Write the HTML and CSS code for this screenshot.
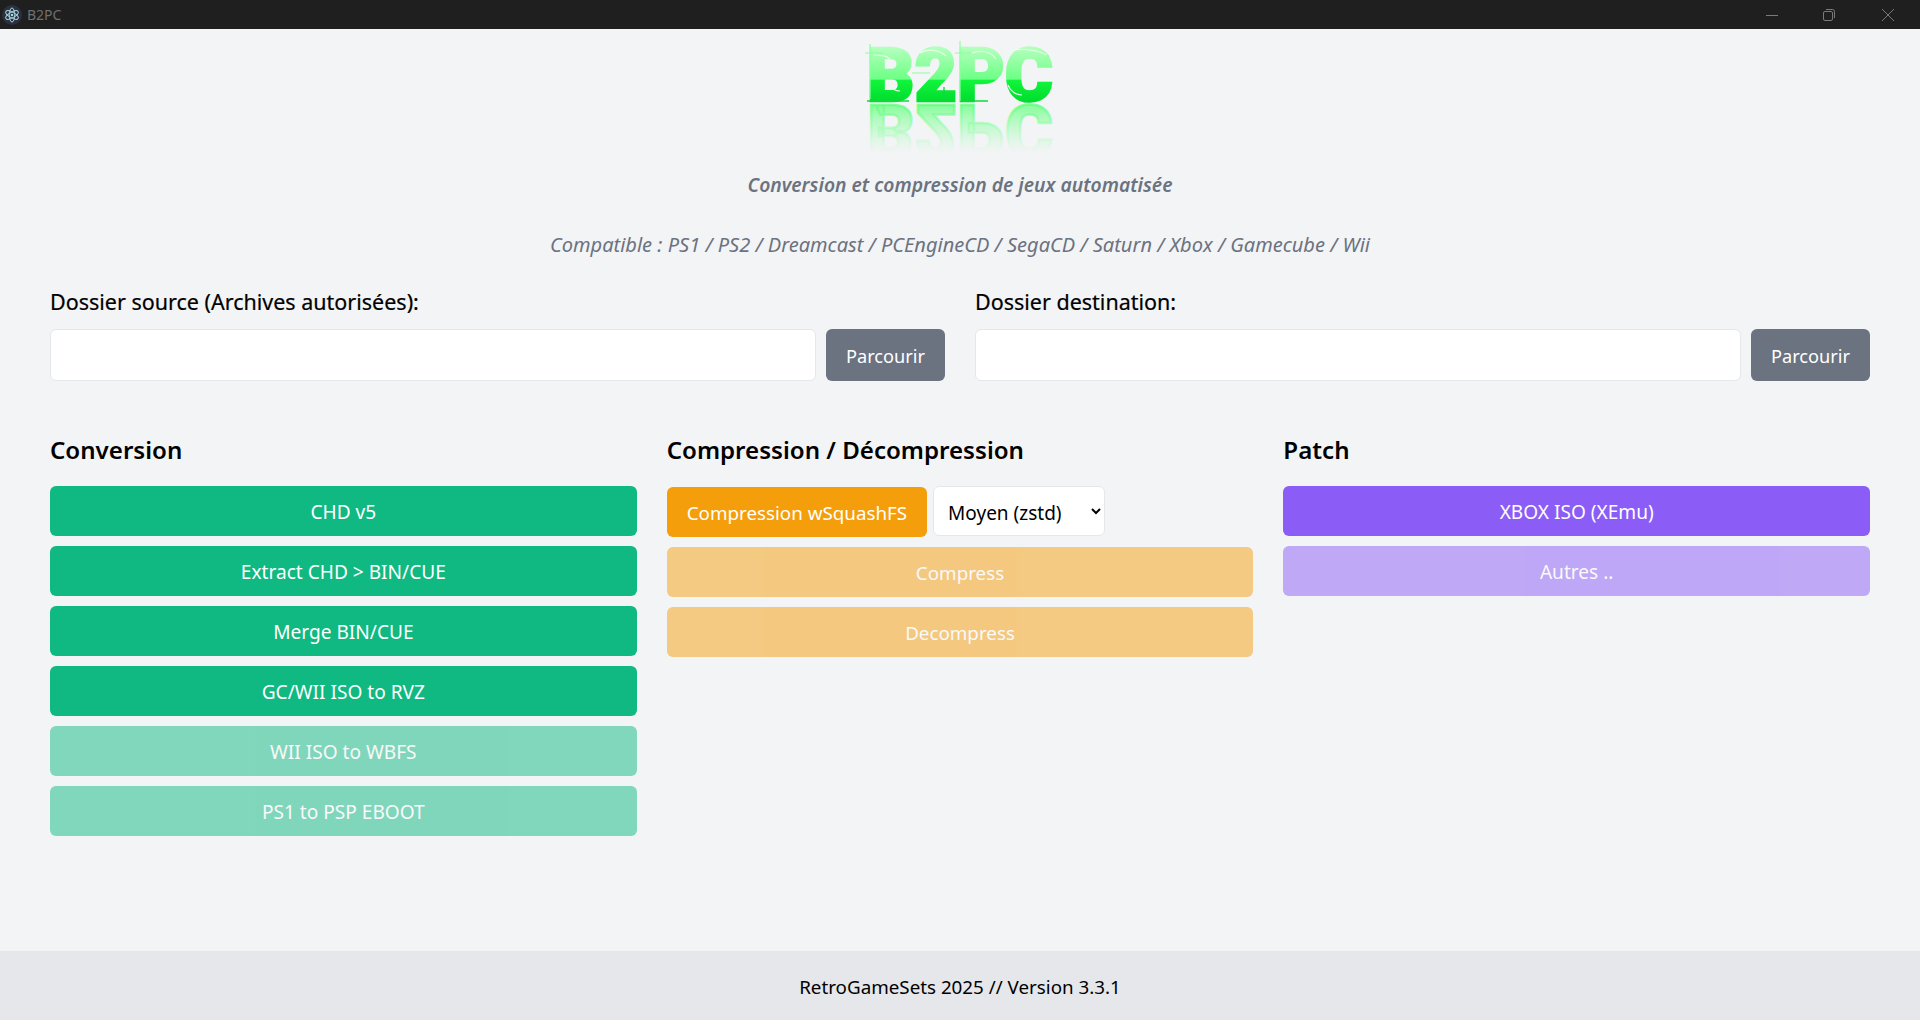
FILE: index.html
```html
<!DOCTYPE html>
<html lang="fr">
<head>
<meta charset="utf-8">
<title>B2PC</title>
<link rel="stylesheet" href="styles.css">
</head>
<body>
<header class="titlebar">
  <div class="titlebar-left">
    <svg class="app-icon" width="20" height="20" viewBox="0 0 20 20" fill="none">
      <circle cx="10" cy="10" r="10" fill="#2b3040"/>
      <g stroke="#a9d6e0" stroke-width="1" fill="none">
        <ellipse cx="10" cy="10" rx="7" ry="2.8" transform="rotate(30 10 10)"/>
        <ellipse cx="10" cy="10" rx="7" ry="2.8" transform="rotate(90 10 10)"/>
        <ellipse cx="10" cy="10" rx="7" ry="2.8" transform="rotate(150 10 10)"/>
      </g>
      <circle cx="10" cy="10" r="1.3" fill="#a9d6e0"/>
    </svg>
    <span class="app-name">B2PC</span>
  </div>
  <div class="window-controls">
    <button class="win-btn" aria-label="Réduire"><svg width="14" height="14" viewBox="0 0 14 14"><path d="M1 7.5h12" stroke="#7a7a7a" stroke-width="1"/></svg></button>
    <button class="win-btn" aria-label="Restaurer"><svg width="14" height="14" viewBox="0 0 14 14" fill="none" stroke="#7a7a7a"><rect x="0.5" y="3.5" width="9" height="9" rx="1.5"/><path d="M3 1.5h6.5a2 2 0 0 1 2 2V10"/></svg></button>
    <button class="win-btn" aria-label="Fermer"><svg width="14" height="14" viewBox="0 0 14 14"><path d="M1 1l12 12M13 1L1 13" stroke="#7a7a7a" stroke-width="1"/></svg></button>
  </div>
</header>

<main class="content">
  <div class="logo-wrap">
    <svg class="logo" width="200" height="122" viewBox="0 0 200 122">
      <defs>
        <linearGradient id="face" x1="0" y1="13" x2="0" y2="67" gradientUnits="userSpaceOnUse">
          <stop offset="0" stop-color="#b4ffbd"/>
          <stop offset="0.58" stop-color="#6cff85"/>
          <stop offset="0.59" stop-color="#12f53c"/>
          <stop offset="1" stop-color="#00dc2e"/>
        </linearGradient>
        <linearGradient id="mirror" x1="0" y1="67" x2="0" y2="18" gradientUnits="userSpaceOnUse">
          <stop offset="0" stop-color="#5cff78" stop-opacity="0.75"/>
          <stop offset="0.5" stop-color="#8dffa0" stop-opacity="0.42"/>
          <stop offset="1" stop-color="#b4ffbd" stop-opacity="0"/>
        </linearGradient>
      </defs>
      <text class="logo-text" x="7" y="66" fill="url(#face)" stroke="url(#face)" textLength="186" lengthAdjust="spacingAndGlyphs">B2PC</text>
      <text class="logo-text" transform="translate(0 136) scale(1 -1)" x="7" y="66" fill="url(#mirror)" stroke="url(#mirror)" textLength="186" lengthAdjust="spacingAndGlyphs">B2PC</text>
      <g class="logo-shine">
        <path d="M14 20c6 0 12 0 16 4M60 18c8-5 20-3 26 3M112 18c12-4 20 0 24 6M146 18c10-6 30-4 40 2M30 50c2 4 6 6 10 6M148 50c2 6 8 10 14 10"/>
      </g>
      <g class="logo-lines-light">
        <path d="M10 9v55M5 18h18M100 6v60M95 18h16M52 38h18M188 20v4"/>
      </g>
      <g class="logo-lines-dark">
        <path d="M7 66h42M102 66h26M84 52v14"/>
      </g>
    </svg>
  </div>
  <p class="tagline">Conversion et compression de jeux automatisée</p>
  <p class="compat">Compatible : PS1 / PS2 / Dreamcast / PCEngineCD / SegaCD / Saturn / Xbox / Gamecube / Wii</p>

  <section class="folders">
    <div class="folder">
      <label class="folder-label">Dossier source (Archives autorisées):</label>
      <div class="folder-row">
        <input class="folder-input" type="text">
        <button class="btn btn-gray">Parcourir</button>
      </div>
    </div>
    <div class="folder">
      <label class="folder-label">Dossier destination:</label>
      <div class="folder-row">
        <input class="folder-input" type="text">
        <button class="btn btn-gray">Parcourir</button>
      </div>
    </div>
  </section>

  <section class="tools">
    <div class="tool-col">
      <h2 class="tool-title">Conversion</h2>
      <button class="btn btn-green">CHD v5</button>
      <button class="btn btn-green">Extract CHD &gt; BIN/CUE</button>
      <button class="btn btn-green">Merge BIN/CUE</button>
      <button class="btn btn-green">GC/WII ISO to RVZ</button>
      <button class="btn btn-green is-dim">WII ISO to WBFS</button>
      <button class="btn btn-green is-dim">PS1 to PSP EBOOT</button>
    </div>
    <div class="tool-col">
      <h2 class="tool-title">Compression / Décompression</h2>
      <div class="squash-row">
        <button class="btn btn-orange btn-inline">Compression wSquashFS</button>
        <select class="squash-select"><option>Moyen (zstd)</option></select>
      </div>
      <button class="btn btn-orange is-dim">Compress</button>
      <button class="btn btn-orange is-dim">Decompress</button>
    </div>
    <div class="tool-col">
      <h2 class="tool-title">Patch</h2>
      <button class="btn btn-purple">XBOX ISO (XEmu)</button>
      <button class="btn btn-purple is-dim">Autres ..</button>
    </div>
  </section>
</main>

<footer class="footer">RetroGameSets 2025 // Version 3.3.1</footer>
</body>
</html>
```
FILE: styles.css
```css
* { box-sizing: border-box; }
html, body { height: 100%; }
body {
  margin: 0;
  display: flex;
  flex-direction: column;
  overflow: hidden;
  background: #f3f4f6;
  color: #000;
  font-family: "Noto Sans", "Open Sans", sans-serif;
  font-size: 18.8px;
}
.titlebar {
  height: 29px;
  flex: none;
  display: flex;
  justify-content: space-between;
  align-items: center;
  background: #1f1f1f;
}
.titlebar-left { display: flex; align-items: center; gap: 5px; padding-left: 2px; }
.app-name { color: #6f6f6f; font-size: 14px; }
.window-controls { display: flex; padding-right: 3px; }
.win-btn {
  width: 58px;
  height: 29px;
  padding: 0;
  border: 0;
  background: none;
  display: flex;
  align-items: center;
  justify-content: center;
}
.content { flex: 1; padding: 0 50px; min-height: 0; }
.logo-wrap { display: flex; justify-content: center; padding-top: 6px; height: 128px; }
.logo { display: block; overflow: visible; }
.logo-text { font-family: Roboto, sans-serif; font-weight: 900; font-size: 74px; stroke-width: 2.5px; }
.logo-shine { fill: none; stroke: #e6ffe9; stroke-width: 1.2px; }
.logo-lines-light { stroke: #8dffa0; stroke-width: 1.2px; }
.logo-lines-dark { stroke: #10d83c; stroke-width: 1.4px; }
.tagline {
  margin: 14px 0 0;
  text-align: center;
  font-size: 19.3px;
  line-height: 28px;
  font-style: italic;
  font-weight: 600;
  color: #6b7280;
}
.compat {
  margin: 32px 0 0;
  text-align: center;
  font-size: 20.05px;
  line-height: 28px;
  font-style: italic;
  color: #6b7280;
}
.folders { display: flex; gap: 30px; margin-top: 29px; }
.folder { flex: 1; }
.folder-label { display: block; font-size: 21.5px; line-height: 28px; margin-bottom: 13px; -webkit-text-stroke: 0.2px #000; }
.folder-row { display: flex; gap: 10px; }
.folder-input {
  flex: 1;
  min-width: 0;
  height: 52px;
  border: 1px solid #e5e7eb;
  border-radius: 6px;
  background: #fff;
}
.btn {
  display: block;
  width: 100%;
  height: 50px;
  padding: 2px 20px 0;
  border: 0;
  border-radius: 6px;
  color: #fff;
  font-family: inherit;
  font-size: 18.8px;
  text-align: center;
}
.btn-gray { width: 119px; height: 52px; padding: 2px 0 0; flex: none; background: #6b7280; font-size: 18.2px; }
.btn-green { background: #10b981; font-size: 19.1px; }
.btn-orange { background: #f59e0b; }
.btn-purple { background: #8b5cf6; font-size: 19.1px; }
.is-dim { opacity: 0.5; }
.tools { display: flex; gap: 30px; margin-top: 52px; }
.tool-col { flex: 1; min-width: 0; display: flex; flex-direction: column; gap: 10px; }
.tool-title { margin: 0 0 9px; font-size: 24.1px; line-height: 34px; font-weight: 600; }
.squash-row { display: flex; gap: 6px; align-items: flex-start; height: 51px; padding-top: 1px; }
.btn-inline { width: auto; flex: none; }
.squash-select {
  width: 172px;
  height: 50px;
  margin-top: -1px;
  padding: 3px 6px 0 10px;
  border: 1px solid #e5e7eb;
  border-radius: 6px;
  background: #fff;
  color: #000;
  font-family: inherit;
  font-size: 19px;
}
.footer {
  flex: none;
  height: 69px;
  padding-top: 2px;
  display: flex;
  align-items: center;
  justify-content: center;
  background: #e5e7eb;
  font-size: 18.8px;
}
```
